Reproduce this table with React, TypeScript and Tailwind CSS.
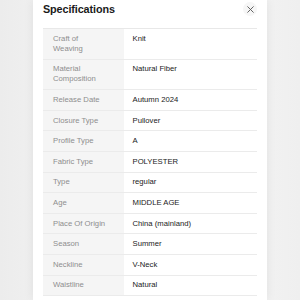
import React from "react";

const rows: [string, string][] = [
  ["Craft of Weaving", "Knit"],
  ["Material Composition", "Natural Fiber"],
  ["Release Date", "Autumn 2024"],
  ["Closure Type", "Pullover"],
  ["Profile Type", "A"],
  ["Fabric Type", "POLYESTER"],
  ["Type", "regular"],
  ["Age", "MIDDLE AGE"],
  ["Place Of Origin", "China (mainland)"],
  ["Season", "Summer"],
  ["Neckline", "V-Neck"],
  ["Waistline", "Natural"],
];

export default function App() {
  return (
    <div
      className="w-[300px] h-[300px] overflow-hidden flex bg-gradient-to-r from-[#ececec] via-[#fafafa] to-[#efefef]"
      style={{ fontFamily: '"Liberation Sans", Arial, sans-serif' }}
    >
      <div className="ml-[33px] w-[234px] h-full bg-white shadow-[0_0_10px_rgba(0,0,0,0.07)] px-[10px]">
        <div className="flex items-center justify-between h-[17px]">
          <div className="text-[10.8px] font-bold text-[#1a1a1a] tracking-[-0.1px] leading-[17px] pt-[1px]">
            Specifications
          </div>
          <div className="w-[14px] h-[14px] rounded-full bg-[#f6f6f6] flex items-center justify-center mt-[1px]">
            <svg width="7" height="7" viewBox="0 0 10 10">
              <path d="M1 1 L9 9 M9 1 L1 9" stroke="#555" strokeWidth="1.3" strokeLinecap="round" />
            </svg>
          </div>
        </div>
        <div className="mt-[11px] border-t border-[#e8e8e8]">
          {rows.map(([k, v]) => (
            <div key={k} className="flex border-b border-[#ebebeb] text-[7.7px] leading-[10px]">
              <div className="w-[81px] shrink-0 bg-[#f5f5f5] pl-[10px] pr-[4px] py-[4.8px] text-[#8e8e8e]">
                {k === "Craft of Weaving" ? (
                  <>
                    Craft of
                    <br />
                    Weaving
                  </>
                ) : k === "Material Composition" ? (
                  <>
                    Material
                    <br />
                    Composition
                  </>
                ) : (
                  k
                )}
              </div>
              <div className="flex-1 pl-[8.5px] py-[4.8px] text-[#222] font-medium">{v}</div>
            </div>
          ))}
        </div>
      </div>
    </div>
  );
}
